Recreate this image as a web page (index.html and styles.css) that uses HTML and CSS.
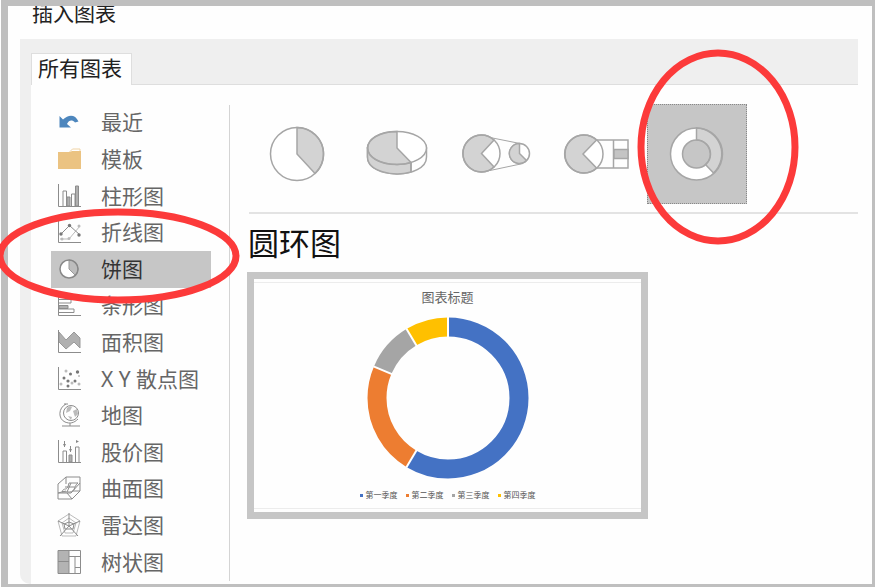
FILE: index.html
```html
<!DOCTYPE html>
<html lang="zh-CN">
<head>
    <meta charset="UTF-8">
    <meta name="viewport" content="width=device-width, initial-scale=1.0">
    <title>插入图表</title>
    <link rel="stylesheet" href="styles.css">
</head>
<body>
    <div class="dialog">
        <h1 class="dialog-title">插入图表</h1>
        <div class="panel">
            <div class="tab-bar">
                <button class="tab" type="button">所有图表</button>
            </div>
            <div class="pane">
                <nav class="sidebar">
                    <button class="item" type="button">
                        <svg class="icon" viewBox="0 0 24 24"><path d="M2.500 6v11.500H14l-4-3.500c2-4 5-4.500 8-1.500l3.500-1C18 4 11.500 4.500 6 9.500z" fill="#4d86bd"/></svg>
                        最近
                    </button>
                    <button class="item" type="button">
                        <svg class="icon" viewBox="0 0 24 24"><path d="M12.500 5l3-3h7.500v5" fill="#fff" stroke="#f0d3a4"/><path d="M1 5h12l2-1h9v18H1z" fill="#ebc382"/></svg>
                        模板
                    </button>
                    <button class="item" type="button">
                        <svg class="icon" viewBox="0 0 24 24"><path d="M1.500 0v22.500H24" class="ln"/><path d="M6 22V7h3.500v15M14.500 22V10H18v12" class="ln"/><path d="M10 13h3v9h-3zM18.500 2h3v20h-3z" class="dk"/></svg>
                        柱形图
                    </button>
                    <button class="item" type="button">
                        <svg class="icon" viewBox="0 0 24 24"><path d="M1.500 0v22.500H24" class="ln"/><path d="M3 19h9l11-13" class="ln lt"/><path d="M4 14l8.500-8.500L23 15" class="ln"/><g class="dot"><circle cx="4" cy="14" r="1.700"/><circle cx="12.500" cy="5.500" r="1.700"/><circle cx="22" cy="15" r="1.700"/></g><g class="dot-lt"><circle cx="5" cy="19" r="1.500"/><circle cx="12" cy="18.500" r="1.500"/><circle cx="22" cy="6" r="1.500"/></g></svg>
                        折线图
                    </button>
                    <button class="item selected" type="button">
                        <svg class="icon" viewBox="0 0 24 24"><circle cx="12" cy="12" r="9" fill="#fff"/><path d="M12 12V3a9 9 0 0 1 6.300 15.300z" fill="#bdbdbd" stroke="#999"/><circle cx="12" cy="12" r="9" fill="none" stroke="#888" stroke-width="1.500"/></svg>
                        饼图
                        <svg class="mark mark-item" viewBox="0 0 244 96"><ellipse cx="122" cy="48" rx="118" ry="44"/></svg>
                    </button>
                    <button class="item" type="button">
                        <svg class="icon" viewBox="0 0 24 24"><path d="M1.500 0v22.500H24" class="ln"/><path d="M2 2.500h16M2 6.500h12V10H2M2 16h15v3.500H2" class="ln"/><path d="M2 12.500h9v3H2z" class="dk"/></svg>
                        条形图
                    </button>
                    <button class="item" type="button">
                        <svg class="icon" viewBox="0 0 24 24"><path d="M2 2l7 8 8-8 6 6v10l-6-6-8 7-7-7z" fill="#b0b0b0" stroke="#999"/><path d="M1.500 0v22.500H24" class="ln"/></svg>
                        面积图
                    </button>
                    <button class="item" type="button">
                        <svg class="icon" viewBox="0 0 24 24"><path d="M1.500 0v22.500H24" class="ln"/><g class="dot"><circle cx="7" cy="11" r="1.500"/><circle cx="13.500" cy="7" r="1.500"/><circle cx="20.500" cy="5" r="1.700"/><circle cx="11" cy="14" r="1.600"/><circle cx="18" cy="14" r="1.500"/><circle cx="11" cy="19" r="1.500"/></g><g class="dot-lt"><circle cx="9" cy="4" r="1.500"/><circle cx="4" cy="17" r="1.500"/><circle cx="15" cy="16" r="1.500"/><circle cx="22" cy="17" r="1.500"/><circle cx="22" cy="9" r="1"/></g></svg>
                        X Y 散点图
                    </button>
                    <button class="item" type="button">
                        <svg class="icon" viewBox="0 0 24 24"><circle cx="14" cy="10" r="7.500" class="ln"/><path d="M7 1h4M9 1C1 5 1 16 8 19c5 2 9 1 13-3M13 20v3M5 23h18" class="ln"/><path d="M10 5c2-2 4-2 5-1l-2 4-4 2zM16 8l4-2 1 5-3 3zM11 13l4 1-1 3z" fill="#bbb"/></svg>
                        地图
                    </button>
                    <button class="item" type="button">
                        <svg class="icon" viewBox="0 0 24 24"><path d="M1.500 0v22.500H24M7.500 1v6M13.500 6v6" class="ln"/><path d="M6 4l1.500 3L9 4zM12 9l1.500 3L15 9zM19 0l3 1.500L19 3z" fill="#888"/><path d="M6 22V11h3.500v11M18.500 22V7H22v15" class="ln"/><path d="M12 15h3v7h-3z" class="dk"/></svg>
                        股价图
                    </button>
                    <button class="item" type="button">
                        <svg class="icon" viewBox="0 0 24 24"><path d="M1 8l8-7h14v14l-8 8H1zM9 1v7M1 17l8-2M15 23l-5-6M23 15h-7M1 17h13l9-10" class="ln"/><path d="M5 16c2-6 5 1 7-9h9c-3 1-3 9-8 9zM8 11h10M10 16l4-9" class="ln"/></svg>
                        曲面图
                    </button>
                    <button class="item" type="button">
                        <svg class="icon" viewBox="0 0 24 24"><path d="M12 1l11 7-4 15H5L1 8zM12 5l7 5-3 10H8L5 10z" class="ln lt"/><path d="M12 0v13M1 8l11 5 11-5M3 23l9-10 9 10M7 11l5-2 5 2-1 5H8z" class="ln"/></svg>
                        雷达图
                    </button>
                    <button class="item" type="button">
                        <svg class="icon" viewBox="0 0 24 24"><path d="M1 1h11v22H1z" fill="#b3b3b3"/><path d="M1 .500h22.500v23H1zM12 1v22M1 11.500h11M12 6.500h11M18 7v16M18 17.500h5" class="ln"/></svg>
                        树状图
                    </button>
                </nav>
                <main class="content">
                    <div class="types">
                        <button class="type" type="button" aria-label="饼图">
                            <svg viewBox="0 0 100 100"><circle cx="50" cy="50" r="26.500" fill="#fff"/><path d="M50 50V23.500a26.500 26.500 0 0 1 18 46z" class="fl"/><circle cx="50" cy="50" r="26.500" class="ol"/></svg>
                        </button>
                        <button class="type" type="button" aria-label="三维饼图">
                            <svg viewBox="0 0 100 100"><path d="M20.500 44v9c0 22.500 59 22.500 59 0v-9z" fill="#fff" class="ol-s"/><path d="M20.500 44v9c0 14 25 20 43.500 15V58z" class="fl"/><ellipse cx="50" cy="44" rx="29.500" ry="16.500" fill="#fff"/><path d="M50 44V27.500c-39 0-39 33 0 33q8 0 14-2z" class="fl"/><ellipse cx="50" cy="44" rx="29.500" ry="16.500" class="ol"/><path d="M64 58v10" class="ol"/></svg>
                        </button>
                        <button class="type" type="button" aria-label="复合饼图">
                            <svg viewBox="0 0 100 100"><path d="M43 33.500l30 6M43 66.500l33-7" class="ol thin"/><circle cx="34.500" cy="49.500" r="18.500" fill="#fff"/><path d="M34.500 49.500L47 36a18.500 18.500 0 1 0 0 27z" class="fl"/><circle cx="34.500" cy="49.500" r="18.500" class="ol"/><circle cx="72.500" cy="49.500" r="10" fill="#fff" class="ol-s"/><path d="M72.500 49.500v-10a10 10 0 1 0 7 17z" class="fl"/></svg>
                        </button>
                        <button class="type" type="button" aria-label="复合条饼图">
                            <svg viewBox="0 0 100 100"><path d="M48 36h33v28H48zM66.500 36v28" class="ol"/><path d="M67 45.500h14v9H67z" fill="#c4c4c4" class="ol-s"/><circle cx="37" cy="50" r="19" fill="#fff"/><path d="M36 50l13.500-14a19 19 0 1 0 0 28z" class="fl"/><circle cx="37" cy="50" r="19" class="ol"/></svg>
                        </button>
                        <button class="type active" type="button" aria-label="圆环图">
                            <svg viewBox="0 0 100 100"><circle cx="49.500" cy="50" r="20" fill="none" stroke="#fff" stroke-width="12"/><path d="M49.500 24a26 26 0 0 1 17 45l-8-8.500a14 14 0 0 0-9-24.500z" class="fl"/><circle cx="49.500" cy="50" r="26" class="ol"/><circle cx="49.500" cy="50" r="14" class="ol"/></svg>
                            <svg class="mark mark-type" viewBox="0 0 162 196"><ellipse cx="81" cy="98" rx="77" ry="94"/></svg>
                        </button>
                    </div>
                    <hr class="divider">
                    <h2 class="chart-name">圆环图</h2>
                    <figure class="preview">
                        <div class="chart">
                            <figcaption class="chart-title">图表标题</figcaption>
                            <svg class="donut" viewBox="0 0 162 162">
                                <g fill="none" stroke-width="19" transform="rotate(-90 81 81)">
                                    <circle cx="81" cy="81" r="71" stroke="#4472c4" pathLength="140" stroke-dasharray="82 58"/>
                                    <circle cx="81" cy="81" r="71" stroke="#ed7d31" pathLength="140" stroke-dasharray="32 108" stroke-dashoffset="-82"/>
                                    <circle cx="81" cy="81" r="71" stroke="#a5a5a5" pathLength="140" stroke-dasharray="14 126" stroke-dashoffset="-114"/>
                                    <circle cx="81" cy="81" r="71" stroke="#ffc000" pathLength="140" stroke-dasharray="12 128" stroke-dashoffset="-128"/>
                                </g>
                                <g stroke="#fff" stroke-width="2">
                                    <path d="M81 0v22"/>
                                    <path d="M81 0v22" transform="rotate(211 81 81)"/>
                                    <path d="M81 0v22" transform="rotate(293 81 81)"/>
                                    <path d="M81 0v22" transform="rotate(329 81 81)"/>
                                </g>
                            </svg>
                            <ul class="legend">
                                <li class="q1">第一季度</li>
                                <li class="q2">第二季度</li>
                                <li class="q3">第三季度</li>
                                <li class="q4">第四季度</li>
                            </ul>
                        </div>
                    </figure>
                </main>
            </div>
        </div>
    </div>
</body>
</html>
```
FILE: styles.css
```css
* {
    box-sizing: border-box;
}

body {
    margin: 0;
    font-family: "Noto Sans", "Noto Sans CJK SC", sans-serif;
    font-size: 21px;
    color: #666;
    background-color: #fff;
}

button {
    font: inherit;
    color: inherit;
    border: none;
    background: none;
    padding: 0;
    cursor: pointer;
}

.dialog {
    display: flex;
    flex-direction: column;
    min-height: 100vh;
    margin-left: 1px;
    padding: 0 14px 0 12px;
    border: solid #bfbfbf;
    border-width: 6px 3px 3px 7px;
    background-color: #fefefe;
}

.dialog-title {
    margin: 0;
    padding: 0 12px 19px;
    font-size: 21px;
    font-weight: 400;
    line-height: 14px;
    color: #222;
    overflow: hidden;
}

/* Tabs */
.panel {
    flex: 1;
    display: flex;
    flex-direction: column;
    padding-left: 11px;
    background-color: #efefef;
    border-bottom-left-radius: 10px;
}

.tab-bar {
    display: flex;
    padding-top: 14px;
    border-bottom: 1px solid #dedede;
}

.tab {
    margin-bottom: -1px;
    padding: 0 9px 2px 6px;
    line-height: 29px;
    color: #222;
    background-color: #fefefe;
    border: 1px solid #dedede;
    border-bottom: none;
}

.pane {
    flex: 1;
    display: flex;
    background-color: #fefefe;
}

/* Chart list */
.sidebar {
    flex: none;
    display: flex;
    flex-direction: column;
    margin: 20px 0 3px;
    padding: 0 18px 0 20px;
    border-right: 1px solid #d4d4d4;
}

.item {
    flex: 1;
    position: relative;
    display: flex;
    align-items: center;
    gap: 20px;
    width: 160px;
    padding: 0 0 2px 6px;
    line-height: 34px;
    white-space: nowrap;
}

.item.selected {
    color: #333;
    background-color: #c6c6c6;
}

.icon {
    flex: none;
    width: 24px;
    height: 24px;
}

.ln {
    fill: none;
    stroke: #8c8c8c;
}

.ln.lt {
    stroke: #bbb;
}

.dk {
    fill: #b0b0b0;
    stroke: #8c8c8c;
}

.dot {
    fill: #777;
}

.dot-lt {
    fill: #bbb;
}

/* Red marks */
.mark {
    position: absolute;
    z-index: 1;
    fill: none;
    stroke: #fc3a3a;
    stroke-width: 7px;
    pointer-events: none;
}

.mark-item {
    left: -55px;
    top: -43px;
    width: 244px;
    height: 96px;
}

.mark-type {
    left: -10px;
    top: -55px;
    width: 162px;
    height: 196px;
}

/* Chart types */
.content {
    flex: 1;
    padding: 19px 0 0 17px;
}

.types {
    display: flex;
}

.type {
    position: relative;
    width: 100px;
    height: 100px;
}

.type svg {
    display: block;
}

.type.active {
    background-color: #c6c6c6;
    outline: 1px dotted #888;
    outline-offset: -1px;
}

.ol {
    fill: none;
    stroke: #a6a6a6;
    stroke-width: 1.5px;
}

.ol-s {
    stroke: #a6a6a6;
    stroke-width: 1.5px;
}

.thin {
    stroke-width: 1px;
}

.fl {
    fill: #d3d3d3;
    stroke: #a6a6a6;
    stroke-width: 1.5px;
}

.divider {
    height: 2px;
    margin: 8px 0 0 2px;
    border: none;
    background-color: #e3e3e3;
}

.chart-name {
    margin: 0;
    padding-left: 1px;
    font-size: 31px;
    font-weight: 400;
    line-height: 58px;
    color: #111;
}

/* Preview */
.preview {
    width: 401px;
    max-width: 100%;
    margin: 0;
    padding: 3px 0;
    border: 7px solid #c6c6c6;
}

.chart {
    display: flex;
    flex-direction: column;
    align-items: center;
    border: solid #ececec;
    border-width: 1px 0;
}

.chart-title {
    padding-top: 4px;
    font-size: 13px;
    line-height: 20px;
    color: #666;
}

.donut {
    width: 162px;
    height: 162px;
    margin-top: 10px;
}

.legend {
    display: flex;
    gap: 8px;
    margin: 0;
    padding: 10px 0 7px;
    list-style: none;
    font-size: 8px;
    line-height: 12px;
    color: #555;
}

.legend li {
    display: flex;
    align-items: center;
    gap: 3px;
}

.legend li::before {
    content: "";
    width: 3px;
    height: 3px;
    background-color: #4472c4;
}

.legend .q2::before {
    background-color: #ed7d31;
}

.legend .q3::before {
    background-color: #a5a5a5;
}

.legend .q4::before {
    background-color: #ffc000;
}
```
